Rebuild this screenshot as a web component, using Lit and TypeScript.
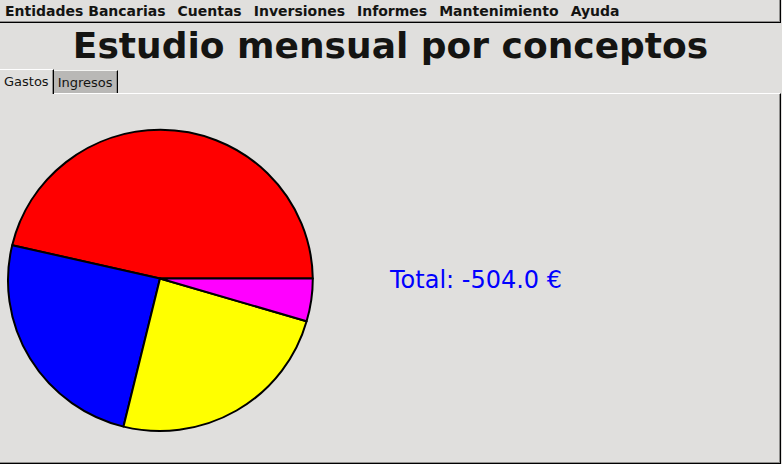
import { LitElement, html, css, svg } from "lit";
import { customElement, state } from "lit/decorators.js";

interface Slice {
  name: string;
  path: string;
}

// Every slice shares the hub at 153,150.5 and runs along the rim ellipse.
const SLICES: Slice[] = [
  {
    name: "red",
    path: "M153 150.5 L305.8 150.5 A152.4 150.7 0 0 0 153.4 1.8 A152.4 150.7 0 0 0 5.2 117.2 Z",
  },
  { name: "blue", path: "M153 150.5 L5.2 117.2 A152.4 150.7 0 0 0 116.5 298.6 Z" },
  { name: "yellow", path: "M153 150.5 L116.5 298.6 A152.4 150.7 0 0 0 299.6 193.2 Z" },
  { name: "magenta", path: "M153 150.5 L299.6 193.2 A152.4 150.7 0 0 0 305.8 150.5 Z" },
];

const MENUS = ["Entidades Bancarias", "Cuentas", "Inversiones", "Informes", "Mantenimiento", "Ayuda"];
const TABS = ["Gastos", "Ingresos"];

@customElement("app-root")
export class AppRoot extends LitElement {
  @state() private tab = 0;

  static styles = css`
    :host {
      display: flex;
      flex-direction: column;
      box-sizing: border-box;
      min-height: 100vh;
      padding-right: 1px;
      background: #e0dfdd;
      color: #141412;
      font-family: "DejaVu Sans", sans-serif;
    }
    button {
      border: 0;
      margin: 0;
      background: none;
      color: inherit;
      font-family: inherit;
      white-space: nowrap;
    }
    .menubar {
      display: flex;
      gap: 12px;
      padding: 0 5px;
      border-right: 1px solid #000;
      border-bottom: 1px solid #000;
      box-shadow: inset -1px -1px #8f8e8c;
    }
    .menu {
      padding: 0;
      font-size: 14px;
      font-weight: bold;
      line-height: 22px;
    }
    .title {
      margin: 0;
      font-size: 36px;
      font-weight: bold;
      line-height: 46px;
      text-align: center;
    }
    .tabs {
      display: flex;
      align-items: flex-end;
    }
    .tab {
      padding: 2px 4px 0;
      border-top: 1px solid #f4f4f2;
      border-right: 1px solid #000;
      background: #b9b8b6;
      box-shadow: inset -1px 0 #8f8e8c;
      font-size: 13px;
      line-height: 20px;
    }
    .tab.active {
      position: relative;
      margin-bottom: -1px;
      padding-bottom: 2px;
      border-top-color: #fff;
      background: #e0dfdd;
    }
    .panel {
      flex: 1;
      display: flex;
      align-items: center;
      gap: 76px;
      padding: 2px 8px 0 7px;
      border-top: 1px solid #fff;
      border-right: 1px solid #000;
      border-bottom: 1px solid #000;
      box-shadow: inset -1px -1px #8f8e8c;
    }
    .pie {
      flex: none;
      width: 307px;
      height: 304px;
      overflow: visible;
    }
    .slice {
      stroke: #000;
      stroke-width: 2;
      stroke-linejoin: round;
    }
    .red { fill: #f00; }
    .blue { fill: #00f; }
    .yellow { fill: #ff0; }
    .magenta { fill: #f0f; }
    .total {
      margin: 0;
      color: #00f;
      font-size: 24px;
      line-height: 28px;
    }
  `;

  render() {
    return html`
      <nav class="menubar">
        ${MENUS.map((m) => html`<button class="menu">${m}</button>`)}
      </nav>
      <h1 class="title">Estudio mensual por conceptos</h1>
      <div class="tabs" role="tablist">
        ${TABS.map(
          (t, i) => html`<button
            class="tab ${i === this.tab ? "active" : ""}"
            role="tab"
            aria-selected=${i === this.tab ? "true" : "false"}
            @click=${() => (this.tab = i)}
          >${t}</button>`
        )}
      </div>
      <section class="panel" role="tabpanel">
        <svg class="pie" viewBox="0 0 307 304" aria-hidden="true">
          ${SLICES.map((s) => svg`<path class="slice ${s.name}" d=${s.path} />`)}
        </svg>
        <p class="total">Total: -504.0 €</p>
      </section>
    `;
  }
}
